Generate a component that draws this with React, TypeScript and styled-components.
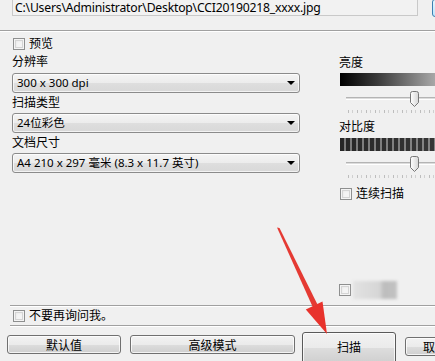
import React from 'react'
import styled, { createGlobalStyle } from 'styled-components'

const GlobalStyle = createGlobalStyle`
  body {
    margin: 0;
    background: #f0f0f0;
  }
`

const Window = styled.div`
  position: relative;
  width: 435px;
  height: 361px;
  overflow: hidden;
  background: #f0f0f0;
  color: #000000;
  font-family: 'Noto Sans', 'Noto Sans CJK SC', sans-serif;
  font-size: 12px;
  display: flex;
  flex-direction: column;
`

const PathRow = styled.div`
  display: flex;
  align-items: flex-start;
  height: 30px;
  padding-left: 12px;
  flex-shrink: 0;
`
const PathField = styled.div`
  flex-shrink: 0;
  width: 402px;
  height: 15px;
  margin-top: -1px;
  border: 1px solid #c9c9c9;
  border-top-color: #b5b5b5;
  background: #f2f2f2;
  padding-left: 2px;
  line-height: 15px;
  font-size: 12.2px;
  letter-spacing: -0.2px;
  white-space: nowrap;
  overflow: hidden;
`
const BrowseButton = styled.div`
  flex-shrink: 0;
  width: 30px;
  height: 16px;
  margin-top: -1px;
  margin-left: 14px;
  border: 1px solid #3c7fb1;
  border-radius: 3px;
  background: linear-gradient(#e8f5fc, #bee6fd);
`

const Divider = styled.div<{ $indent?: number }>`
  flex-shrink: 0;
  height: 0;
  margin-left: ${(p) => p.$indent ?? 0}px;
  border-top: 1px solid #a0a0a0;
  border-bottom: 1px solid #ffffff;
`

const Main = styled.div`
  display: flex;
  height: 273px;
  padding-left: 12px;
  flex-shrink: 0;
`
const LeftCol = styled.div`
  width: 288px;
  display: flex;
  flex-direction: column;
  flex-shrink: 0;
`
const RightCol = styled.div`
  width: 150px;
  margin-left: 39px;
  display: flex;
  flex-direction: column;
  flex-shrink: 0;
`

const CheckRow = styled.label<{ $top?: number }>`
  display: flex;
  align-items: center;
  gap: 4px;
  height: 14px;
  margin-top: ${(p) => p.$top ?? 0}px;
  padding-left: 1px;
  line-height: 14px;
`
const CheckBox = styled.span`
  width: 10px;
  height: 10px;
  border: 1px solid #8e8f8f;
  background: #f4f4f4;
  box-shadow: inset 0 0 0 1px #f4f4f4, inset 0 0 0 2px #d4d4d4,
    inset 1px 1px 3px #cfcfcf;
  flex-shrink: 0;
`

const Label = styled.div<{ $h?: number; $top?: number }>`
  height: ${(p) => p.$h ?? 20}px;
  line-height: ${(p) => p.$h ?? 20}px;
  margin-top: ${(p) => p.$top ?? 0}px;
`

const Select = styled.div`
  position: relative;
  height: 18px;
  border: 1px solid #8b8b8b;
  border-radius: 3px;
  background: linear-gradient(#f4f4f4 0%, #ececec 50%, #dedede 51%, #d8d8d8 100%);
  box-shadow: inset 0 0 0 1px rgba(255, 255, 255, 0.7);
  padding-left: 4px;
  line-height: 18px;
  font-size: 11.5px;
  white-space: nowrap;
`
const SelectArrow = styled.span`
  position: absolute;
  right: 4px;
  top: 7px;
  width: 0;
  height: 0;
  border-left: 4px solid transparent;
  border-right: 4px solid transparent;
  border-top: 4px solid #000000;
`

const ToneBar = styled.div<{ $kind: 'gradient' | 'stripes' }>`
  height: 13px;
  margin-left: 1px;
  background: ${(p) =>
    p.$kind === 'gradient'
      ? 'linear-gradient(90deg, #000000 0%, #3a3a3a 25%, #a8a8a8 64%, #ffffff 100%)'
      : 'linear-gradient(90deg, rgba(255,255,255,0) 0%, rgba(255,255,255,0.12) 100%), repeating-linear-gradient(90deg, #262626 0 4px, #7a7a7a 4px 6px)'};
`
const BarGap = styled.div`
  height: 1px;
`

const SliderBox = styled.div`
  position: relative;
  height: 31px;
`
const SliderTrack = styled.div`
  position: absolute;
  left: 7px;
  right: 0;
  top: 11px;
  height: 1px;
  border-top: 1px solid #b4b4b4;
  border-bottom: 1px solid #ffffff;
  background: #dcdcdc;
`
const SliderTicks = styled.div`
  position: absolute;
  left: 9px;
  right: 0;
  top: 24px;
  height: 3px;
  background: repeating-linear-gradient(
    90deg,
    #bdbdbd 0 1px,
    transparent 1px 4px,
    #d0d0d0 4px 5px,
    transparent 5px 9px
  );
`
const ThumbWrap = styled.div`
  position: absolute;
  left: 70px;
  top: 5px;
  width: 11px;
  height: 17px;
`

const Thumb = () => (
  <ThumbWrap>
    <svg width="11" height="17" viewBox="0 0 11 17">
      <defs>
        <linearGradient id="thumbFill" x1="0" y1="0" x2="1" y2="0">
          <stop offset="0" stopColor="#ffffff" />
          <stop offset="1" stopColor="#d6d6d6" />
        </linearGradient>
      </defs>
      <path
        d="M1.5 2.5 Q1.5 0.5 3.5 0.5 H7.5 Q9.5 0.5 9.5 2.5 V11.5 L5.5 15.5 L1.5 11.5 Z"
        fill="url(#thumbFill)"
        stroke="#777777"
      />
    </svg>
  </ThumbWrap>
)

const Slider = () => (
  <SliderBox>
    <SliderTrack />
    <SliderTicks />
    <Thumb />
  </SliderBox>
)

const HiddenOption = styled.div`
  display: flex;
  align-items: center;
  gap: 2px;
  height: 20px;
  margin-top: auto;
  margin-bottom: 5px;
`
const Smudge = styled.div`
  width: 44px;
  height: 18px;
  background: linear-gradient(90deg, #e2e2e2 0%, #d6d6d6 60%, #bdbdbd 70%, #c2c2c2 100%);
  filter: blur(1.5px);
`

const Footer = styled.div`
  display: flex;
  flex-direction: column;
  flex-shrink: 0;
`
const FooterCheck = styled.div`
  height: 18px;
  padding-left: 12px;
  display: flex;
  align-items: center;
`

const ButtonRow = styled.div`
  display: flex;
  align-items: flex-start;
  height: 35px;
  padding-left: 7px;
`
const Button = styled.div<{ $w: number; $top: number; $h?: number; $gap?: number; $primary?: boolean }>`
  flex-shrink: 0;
  width: ${(p) => p.$w}px;
  height: ${(p) => p.$h ?? 19}px;
  margin-top: ${(p) => p.$top}px;
  margin-left: ${(p) => p.$gap ?? 0}px;
  border: 1px solid ${(p) => (p.$primary ? '#5a5a5a' : '#707070')};
  border-radius: 3px;
  background: linear-gradient(#f2f2f2 0%, #ebebeb 50%, #dddddd 51%, #cfcfcf 100%);
  box-shadow: inset 0 0 0 1px rgba(255, 255, 255, 0.75);
  display: flex;
  justify-content: center;
  padding-top: ${(p) => (p.$primary ? 6 : 1)}px;
  box-sizing: border-box;
  line-height: 17px;
  font-size: 12px;
  white-space: nowrap;
`

const ArrowLayer = styled.svg`
  position: absolute;
  left: 0;
  top: 0;
  pointer-events: none;
`

const RedArrow = () => (
  <ArrowLayer width="435" height="361" viewBox="0 0 435 361">
    <polygon
      points="277,227.5 279.5,228 317.5,304.5 312.5,306.5"
      fill="#e53a33"
    />
    <polygon points="327,334 322.5,301.5 305.8,309.5" fill="#e8322c" />
  </ArrowLayer>
)

export default function App() {
  return (
    <>
      <GlobalStyle />
      <Window>
        <PathRow>
          <PathField>C:\Users\Administrator\Desktop\CCI20190218_xxxx.jpg</PathField>
          <BrowseButton />
        </PathRow>
        <Divider />
        <Main>
          <LeftCol>
            <CheckRow $top={5}>
              <CheckBox />
              预览
            </CheckRow>
            <Label $h={22}>分辨率</Label>
            <Select>
              300 x 300 dpi
              <SelectArrow />
            </Select>
            <Label>扫描类型</Label>
            <Select>
              24位彩色
              <SelectArrow />
            </Select>
            <Label>文档尺寸</Label>
            <Select>
              A4 210 x 297 毫米 (8.3 x 11.7 英寸)
              <SelectArrow />
            </Select>
          </LeftCol>
          <RightCol>
            <Label $top={21}>亮度</Label>
            <ToneBar $kind="gradient" />
            <Slider />
            <Label>对比度</Label>
            <BarGap />
            <ToneBar $kind="stripes" />
            <Slider />
            <CheckRow $top={5}>
              <CheckBox />
              连续扫描
            </CheckRow>
            <HiddenOption>
              <CheckBox />
              <Smudge />
            </HiddenOption>
          </RightCol>
        </Main>
        <Footer>
          <Divider $indent={10} />
          <FooterCheck>
            <CheckRow>
              <CheckBox />
              不要再询问我。
            </CheckRow>
          </FooterCheck>
          <Divider $indent={10} />
          <ButtonRow>
            <Button $w={114} $top={8}>默认值</Button>
            <Button $w={165} $top={8} $gap={9}>高级模式</Button>
            <Button $w={94} $top={5} $h={32} $gap={7} $primary>扫描</Button>
            <Button $w={60} $top={10} $gap={9}>取消</Button>
          </ButtonRow>
        </Footer>
        <RedArrow />
      </Window>
    </>
  )
}
